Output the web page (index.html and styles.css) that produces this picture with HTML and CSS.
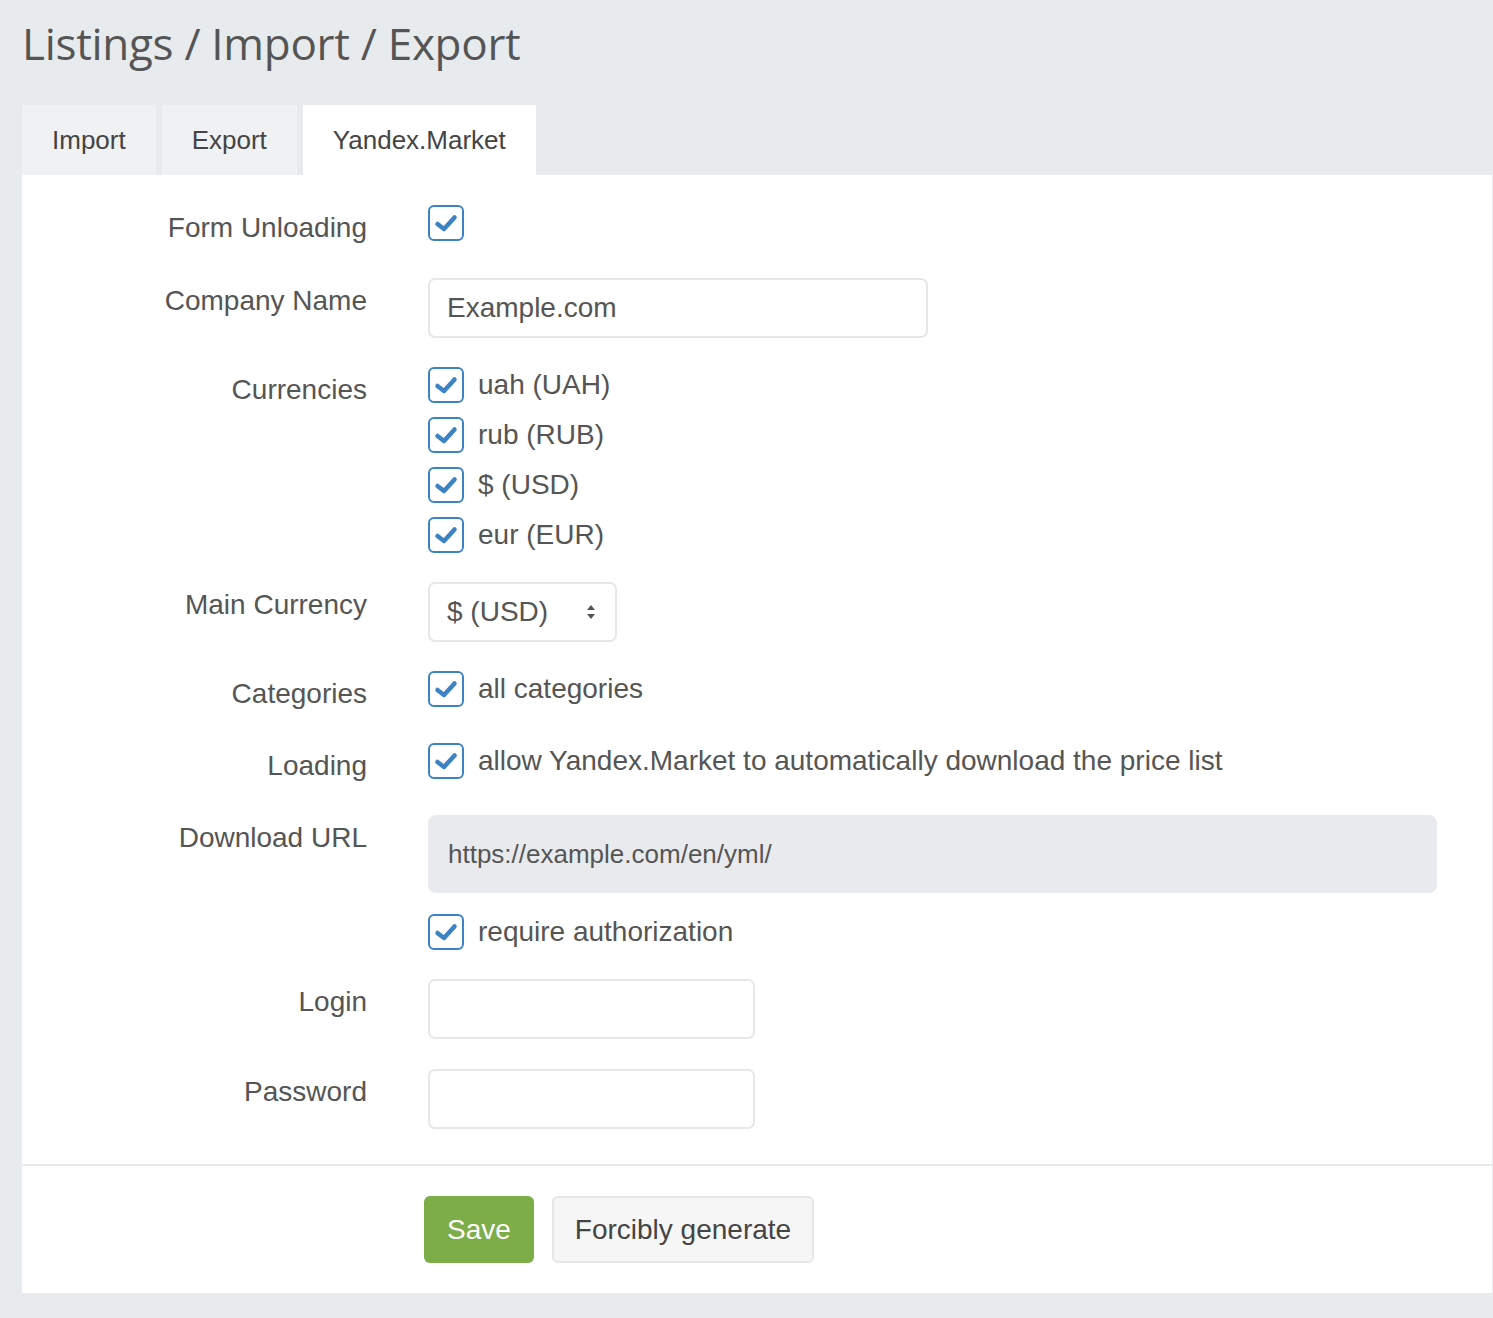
FILE: index.html
```html
<!DOCTYPE html>
<html lang="en">
<head>
  <meta charset="UTF-8">
  <meta name="viewport" content="width=device-width, initial-scale=1.0">
  <title>Listings / Import / Export</title>
  <link rel="stylesheet" href="styles.css">
</head>
<body>
  <div class="page-header">
    <h1>Listings / Import / Export</h1>
  </div>

  <div class="tabs">
    <div class="tab">Import</div>
    <div class="tab">Export</div>
    <div class="tab active">Yandex.Market</div>
  </div>

  <div class="panel">
    <div class="form">
      <div class="form-row check-row">
        <label class="form-label">Form Unloading</label>
        <div class="form-control">
          <span class="checkbox"><svg viewBox="0 0 32 32"><path d="M7.5 17 L14 22 L24.5 10.5"/></svg></span>
        </div>
      </div>

      <div class="form-row">
        <label class="form-label">Company Name</label>
        <div class="form-control">
          <div class="input input-wide">Example.com</div>
        </div>
      </div>

      <div class="form-row">
        <label class="form-label">Currencies</label>
        <div class="form-control check-list">
          <div class="check-item">
            <span class="checkbox"><svg viewBox="0 0 32 32"><path d="M7.5 17 L14 22 L24.5 10.5"/></svg></span>
            <span>uah (UAH)</span>
          </div>
          <div class="check-item">
            <span class="checkbox"><svg viewBox="0 0 32 32"><path d="M7.5 17 L14 22 L24.5 10.5"/></svg></span>
            <span>rub (RUB)</span>
          </div>
          <div class="check-item">
            <span class="checkbox"><svg viewBox="0 0 32 32"><path d="M7.5 17 L14 22 L24.5 10.5"/></svg></span>
            <span>$ (USD)</span>
          </div>
          <div class="check-item">
            <span class="checkbox"><svg viewBox="0 0 32 32"><path d="M7.5 17 L14 22 L24.5 10.5"/></svg></span>
            <span>eur (EUR)</span>
          </div>
        </div>
      </div>

      <div class="form-row">
        <label class="form-label">Main Currency</label>
        <div class="form-control">
          <div class="input select">
            <span>$ (USD)</span>
            <svg class="select-arrows" viewBox="0 0 10 16"><path d="M5 1 L9 6 L1 6 Z"/><path d="M5 15 L9 10 L1 10 Z"/></svg>
          </div>
        </div>
      </div>

      <div class="form-row check-row">
        <label class="form-label">Categories</label>
        <div class="form-control">
          <div class="check-item">
            <span class="checkbox"><svg viewBox="0 0 32 32"><path d="M7.5 17 L14 22 L24.5 10.5"/></svg></span>
            <span>all categories</span>
          </div>
        </div>
      </div>

      <div class="form-row check-row">
        <label class="form-label">Loading</label>
        <div class="form-control">
          <div class="check-item">
            <span class="checkbox"><svg viewBox="0 0 32 32"><path d="M7.5 17 L14 22 L24.5 10.5"/></svg></span>
            <span>allow Yandex.Market to automatically download the price list</span>
          </div>
        </div>
      </div>

      <div class="form-row">
        <label class="form-label">Download URL</label>
        <div class="form-control">
          <div class="readonly-box">https://example.com/en/yml/</div>
          <div class="check-item auth-check">
            <span class="checkbox"><svg viewBox="0 0 32 32"><path d="M7.5 17 L14 22 L24.5 10.5"/></svg></span>
            <span>require authorization</span>
          </div>
        </div>
      </div>

      <div class="form-row login-row">
        <label class="form-label">Login</label>
        <div class="form-control">
          <div class="input input-short"></div>
        </div>
      </div>

      <div class="form-row last">
        <label class="form-label">Password</label>
        <div class="form-control">
          <div class="input input-short"></div>
        </div>
      </div>
    </div>

    <div class="form-footer">
      <button class="btn btn-save">Save</button>
      <button class="btn btn-default">Forcibly generate</button>
    </div>
  </div>
</body>
</html>
```

FILE: styles.css
```css
/* Page */
body {
  margin: 0;
  background-color: #e8ebee;
  color: #555;
  font-family: 'Liberation Sans', Arial, sans-serif;
  font-size: 28px;
}

.page-header {
  height: 105px;
  padding: 0 22px;
  box-sizing: border-box;
}

.page-header h1 {
  margin: 0;
  padding-top: 12px;
  font-family: 'Open Sans', sans-serif;
  font-weight: 400;
  font-size: 44px;
  line-height: 62px;
  letter-spacing: -0.3px;
  color: #555;
}

/* Tabs */
.tabs {
  display: flex;
  gap: 6px;
  padding-left: 22px;
}

.tab {
  height: 70px;
  line-height: 70px;
  padding: 0 30px;
  font-size: 26px;
  color: #444;
  background-color: #eff1f3;
}

.tab.active {
  background-color: #fff;
}

/* Panel */
.panel {
  background: #fff;
  margin: 0 1px 25px 22px;
}

.form {
  padding: 30px 55px 35px 0;
}

.form-row {
  display: grid;
  grid-template-columns: 345px 1fr;
  column-gap: 61px;
  margin-bottom: 29px;
}

.form-row:first-child,
.form-row.login-row {
  margin-bottom: 30px;
}

.form-row.check-row {
  min-height: 43px;
}

.form-row.last {
  margin-bottom: 0;
}

.form-label {
  text-align: right;
  line-height: 40px;
  padding-top: 3px;
  color: #555;
}

.form-control {
  min-width: 0;
}

/* Checkboxes */
.checkbox {
  display: inline-block;
  width: 36px;
  height: 36px;
  box-sizing: border-box;
  border: 2px solid #3d83c4;
  border-radius: 6px;
  flex: none;
}

.checkbox svg {
  display: block;
  width: 32px;
  height: 32px;
}

.checkbox path {
  fill: none;
  stroke: #3d83c4;
  stroke-width: 4.5;
  stroke-linecap: round;
  stroke-linejoin: round;
}

.check-list {
  display: flex;
  flex-direction: column;
  gap: 14px;
}

.check-item {
  display: flex;
  align-items: center;
  gap: 14px;
  height: 36px;
  line-height: 36px;
}

.auth-check {
  margin-top: 21px;
}

/* Inputs */
.input {
  height: 60px;
  box-sizing: border-box;
  border: 2px solid #e6e7e8;
  border-radius: 7px;
  padding: 0 17px;
  display: flex;
  align-items: center;
  color: #555;
}

.input-wide {
  width: 500px;
}

.input-short {
  width: 327px;
}

.select {
  width: 189px;
  justify-content: space-between;
}

.select-arrows {
  width: 10px;
  height: 16px;
  margin-right: 2px;
}

.select-arrows path {
  fill: #555;
}

.readonly-box {
  height: 78px;
  display: flex;
  align-items: center;
  padding: 0 20px;
  background-color: #e8eaed;
  border-radius: 8px;
  font-size: 26px;
  color: #555;
}

/* Footer */
.form-footer {
  border-top: 2px solid #e7eaed;
  padding: 30px 0 30px 402px;
  display: flex;
  gap: 18px;
}

.btn {
  height: 67px;
  padding: 0 23px;
  font-family: 'Liberation Sans', Arial, sans-serif;
  font-size: 28px;
  border-radius: 6px;
  cursor: pointer;
}

.btn-save {
  background-color: #7cad48;
  color: #fff;
  border: none;
}

.btn-default {
  padding: 0 21px;
  background-color: #f6f6f6;
  color: #444;
  border: 2px solid #e6e6e6;
}
```
